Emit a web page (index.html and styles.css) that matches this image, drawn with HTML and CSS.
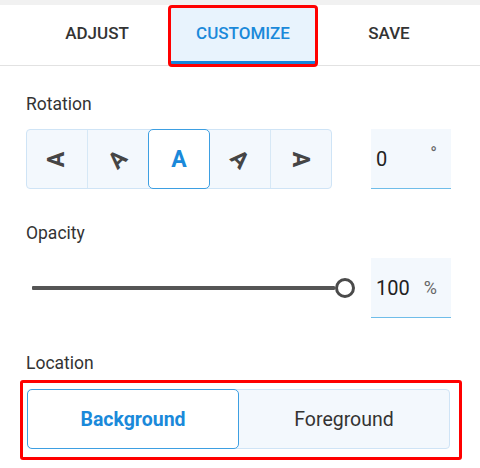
FILE: index.html
```html
<!DOCTYPE html>
<html lang="en">
<head>
<meta charset="utf-8">
<title>Customize</title>
<link rel="stylesheet" href="styles.css">
</head>
<body>
<div class="topbar"></div>
<nav class="tabs">
  <div class="tab">ADJUST</div>
  <div class="tab active">CUSTOMIZE</div>
  <div class="tab">SAVE</div>
</nav>
<main class="panel">
  <div class="label label-first">Rotation</div>
  <div class="row">
    <div class="seg rot">
      <button class="rbtn"><span class="glyph r-90">A</span></button>
      <button class="rbtn"><span class="glyph r-45">A</span></button>
      <button class="rbtn sel"><span class="glyph">A</span></button>
      <button class="rbtn"><span class="glyph r45">A</span></button>
      <button class="rbtn"><span class="glyph r90">A</span></button>
    </div>
    <div class="field"><span class="val">0</span><span class="unit deg">°</span></div>
  </div>

  <div class="label">Opacity</div>
  <div class="row slider-row">
    <div class="slider">
      <div class="track"></div>
      <div class="thumb"></div>
    </div>
    <div class="field"><span class="val">100</span><span class="unit">%</span></div>
  </div>

  <div class="label label-loc">Location</div>
  <div class="loc-wrap">
    <div class="seg loc">
      <button class="lbtn sel">Background</button>
      <button class="lbtn">Foreground</button>
    </div>
  </div>
</main>
</body>
</html>
```

FILE: styles.css
```css
* { box-sizing: border-box; }
html, body { margin: 0; padding: 0; background: #ffffff; }
body {
  width: 480px;
  height: 468px;
  overflow: hidden;
  font-family: Roboto, "Liberation Sans", sans-serif;
  color: #333333;
}
.topbar { height: 5px; background: #f1f1f1; }
.tabs {
  display: flex;
  padding: 2px 0 0 24px;
  border-bottom: 1px solid #e2e2e2;
}
.tab {
  width: 146px;
  height: 58px;
  display: flex;
  align-items: center;
  justify-content: center;
  padding-bottom: 6px;
  font-size: 17px;
  font-weight: 500;
  color: #333333;
  letter-spacing: 0;
}
.tab.active {
  background: #e8f3fd;
  color: #1a89da;
  border-bottom: 4px solid #1786db;
  padding-bottom: 2px;
  outline: 3px solid #ff0000;
  outline-offset: -1px;
  border-radius: 2px;
}
.panel { padding: 0 29px 0 26px; }
.label {
  font-size: 17.5px;
  line-height: 20px;
  color: #333333;
  margin: 34px 0 15px;
}
.label-first { margin-top: 28px; }
.label-loc { margin-top: 35px; margin-bottom: 16px; }
.row {
  display: flex;
  justify-content: space-between;
  align-items: stretch;
}
.seg {
  display: flex;
  background: #f3f8fd;
  border: 1px solid #cfe4f6;
  border-radius: 4px;
}
.rot { width: 306px; height: 60px; }
.rbtn {
  flex: 1;
  border: 0;
  background: transparent;
  position: relative;
  display: flex;
  align-items: center;
  justify-content: center;
  padding: 0;
  font-family: inherit;
}
.rbtn + .rbtn { border-left: 1px solid #d6e8f6; }
.rbtn.sel + .rbtn, .rbtn.sel { border-left: 0; }
.rbtn.sel {
  background: #ffffff;
  border: 1.5px solid #3d9fe2;
  border-radius: 5px;
  margin: -1px 0;
}
.glyph {
  display: inline-block;
  font-size: 23px;
  font-weight: 700;
  color: #454545;
  line-height: 1;
}
.sel .glyph { color: #1a89da; font-size: 23px; }
.r-90 { transform: rotate(-90deg); }
.r-45 { transform: rotate(-45deg); }
.r45 { transform: rotate(45deg); }
.r90 { transform: rotate(90deg); }
.field {
  width: 80px;
  height: 60px;
  background: #f3f8fd;
  border-bottom: 1px solid #6fbde9;
  display: flex;
  align-items: center;
  justify-content: space-between;
  padding: 0 14px 0 5px;
}
.val { font-size: 20px; color: #222222; }
.unit { font-size: 18px; color: #666666; margin-top: 0; }
.unit.deg { margin-top: -10px; }
.slider-row { gap: 16px; }
.slider {
  flex: 1;
  display: flex;
  align-items: center;
  padding-left: 6px;
}
.track { flex: 1; height: 4px; background: #555555; border-radius: 1px; }
.thumb {
  width: 20px;
  height: 20px;
  border-radius: 50%;
  border: 3px solid #4a4a4a;
  background: #ffffff;
}
.loc-wrap { position: relative; padding: 0 1px; }
.loc-wrap::after {
  content: "";
  position: absolute;
  top: -9px;
  left: -6px;
  right: -11px;
  bottom: -11px;
  border: 3px solid #ff0000;
  border-radius: 3px;
  pointer-events: none;
}
.loc { height: 60px; }
.lbtn {
  flex: 1;
  border: 0;
  background: transparent;
  font-family: inherit;
  font-size: 19.5px;
  color: #333333;
  padding: 0;
}
.lbtn.sel {
  flex: 0 0 212px;
  background: #ffffff;
  border: 1.5px solid #3d9fe2;
  border-radius: 5px;
  margin: -1px 0 -1px -1px;
  color: #1a89da;
  font-weight: 700;
}
```
